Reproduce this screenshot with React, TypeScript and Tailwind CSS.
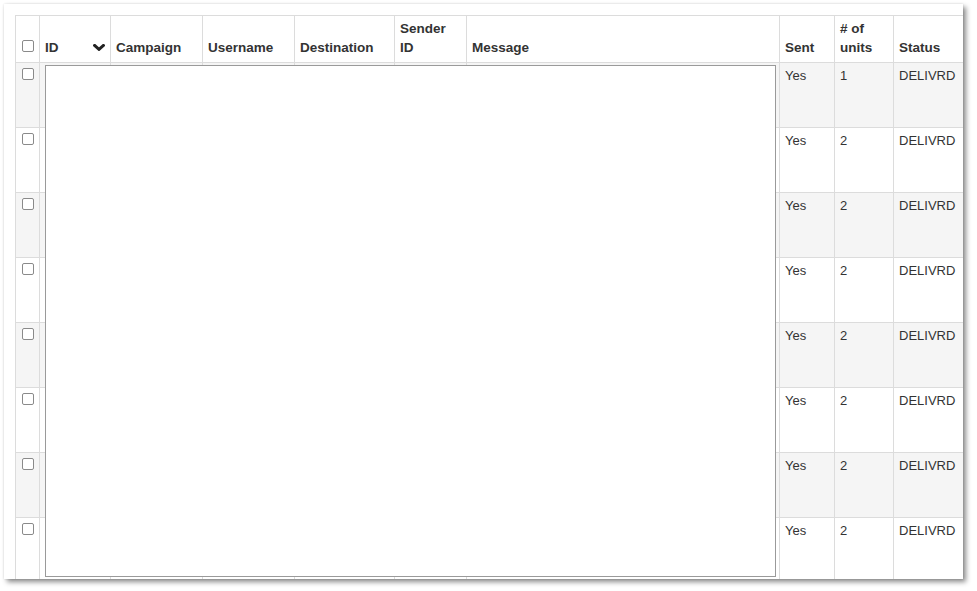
import React from "react";

const cols = [24, 71, 92, 92, 100, 72, 313, 55, 59, 77];
const units = ["1", "2", "2", "2", "2", "2", "2", "2"];

function Chevron() {
  return (
    <svg width="12" height="7" viewBox="0 0 12 7" className="block">
      <path d="M1.6 1.4 L6 5.4 L10.4 1.4" fill="none" stroke="#222" strokeWidth="2.9" strokeLinecap="square" />
    </svg>
  );
}

function Box({ block }: { block?: boolean }) {
  return (
    <span
      className={`${block ? "block" : "inline-block align-top"} w-[12px] h-[12px] rounded-[2px] border border-[#8a8a8a] bg-white`}
    />
  );
}

export default function App() {
  return (
    <div className="w-[977px] h-[591px] bg-white p-1 font-['Liberation_Sans',Arial,sans-serif] text-[13px] leading-[1.42857] text-[#333]">
      <div className="relative w-[959px] h-[575px] overflow-hidden bg-white pl-[11px] pt-[11px] shadow-[0_0_2px_rgba(0,0,0,0.12),3px_3px_5px_rgba(0,0,0,0.45)]">
        <table className="table-fixed border-collapse w-[955px]">
          <colgroup>
            {cols.map((w, i) => (
              <col key={i} style={{ width: w }} />
            ))}
          </colgroup>
          <thead>
            <tr className="h-[47px] align-bottom font-bold text-[13.5px] leading-[18.5px] text-[#333]">
              <th className="border border-[#dcdcdc] pl-[6px] pb-[10px] text-left font-normal">
                <Box block />
              </th>
              <th className="border border-[#dcdcdc] px-[5px] pb-[5px] text-left">
                <div className="flex items-center justify-between">
                  <span>ID</span>
                  <span className="pr-[0px]"><Chevron /></span>
                </div>
              </th>
              <th className="border border-[#dcdcdc] px-[5px] pb-[5px] text-left">Campaign</th>
              <th className="border border-[#dcdcdc] px-[5px] pb-[5px] text-left">Username</th>
              <th className="border border-[#dcdcdc] px-[5px] pb-[5px] text-left">Destination</th>
              <th className="border border-[#dcdcdc] px-[5px] pb-[5px] text-left">
                Sender
                <br />
                ID
              </th>
              <th className="border border-[#dcdcdc] px-[5px] pb-[5px] text-left">Message</th>
              <th className="border border-[#dcdcdc] px-[5px] pb-[5px] text-left">Sent</th>
              <th className="border border-[#dcdcdc] px-[5px] pb-[5px] text-left">
                # of
                <br />
                units
              </th>
              <th className="border border-[#dcdcdc] px-[5px] pb-[5px] text-left">Status</th>
            </tr>
          </thead>
          <tbody>
            {units.map((u, i) => (
              <tr key={i} className={`h-[65px] align-top ${i % 2 === 0 ? "bg-[#f5f5f5]" : "bg-white"}`}>
                <td className="border border-[#dcdcdc] pl-[6px] pt-[5px]">
                  <Box />
                </td>
                <td className="border border-[#dcdcdc] px-[5px] pt-[4px]"></td>
                <td className="border border-[#dcdcdc] px-[5px] pt-[4px]"></td>
                <td className="border border-[#dcdcdc] px-[5px] pt-[4px]"></td>
                <td className="border border-[#dcdcdc] px-[5px] pt-[4px]"></td>
                <td className="border border-[#dcdcdc] px-[5px] pt-[4px]"></td>
                <td className="border border-[#dcdcdc] px-[5px] pt-[4px]"></td>
                <td className="border border-[#dcdcdc] px-[5px] pt-[4px]">Yes</td>
                <td className="border border-[#dcdcdc] px-[5px] pt-[4px]">{u}</td>
                <td className="border border-[#dcdcdc] px-[5px] pt-[4px]">DELIVRD</td>
              </tr>
            ))}
          </tbody>
        </table>
        <div className="absolute left-[41px] top-[61px] w-[731px] h-[512px] border border-[#9a9a9a] bg-white" />
      </div>
    </div>
  );
}
